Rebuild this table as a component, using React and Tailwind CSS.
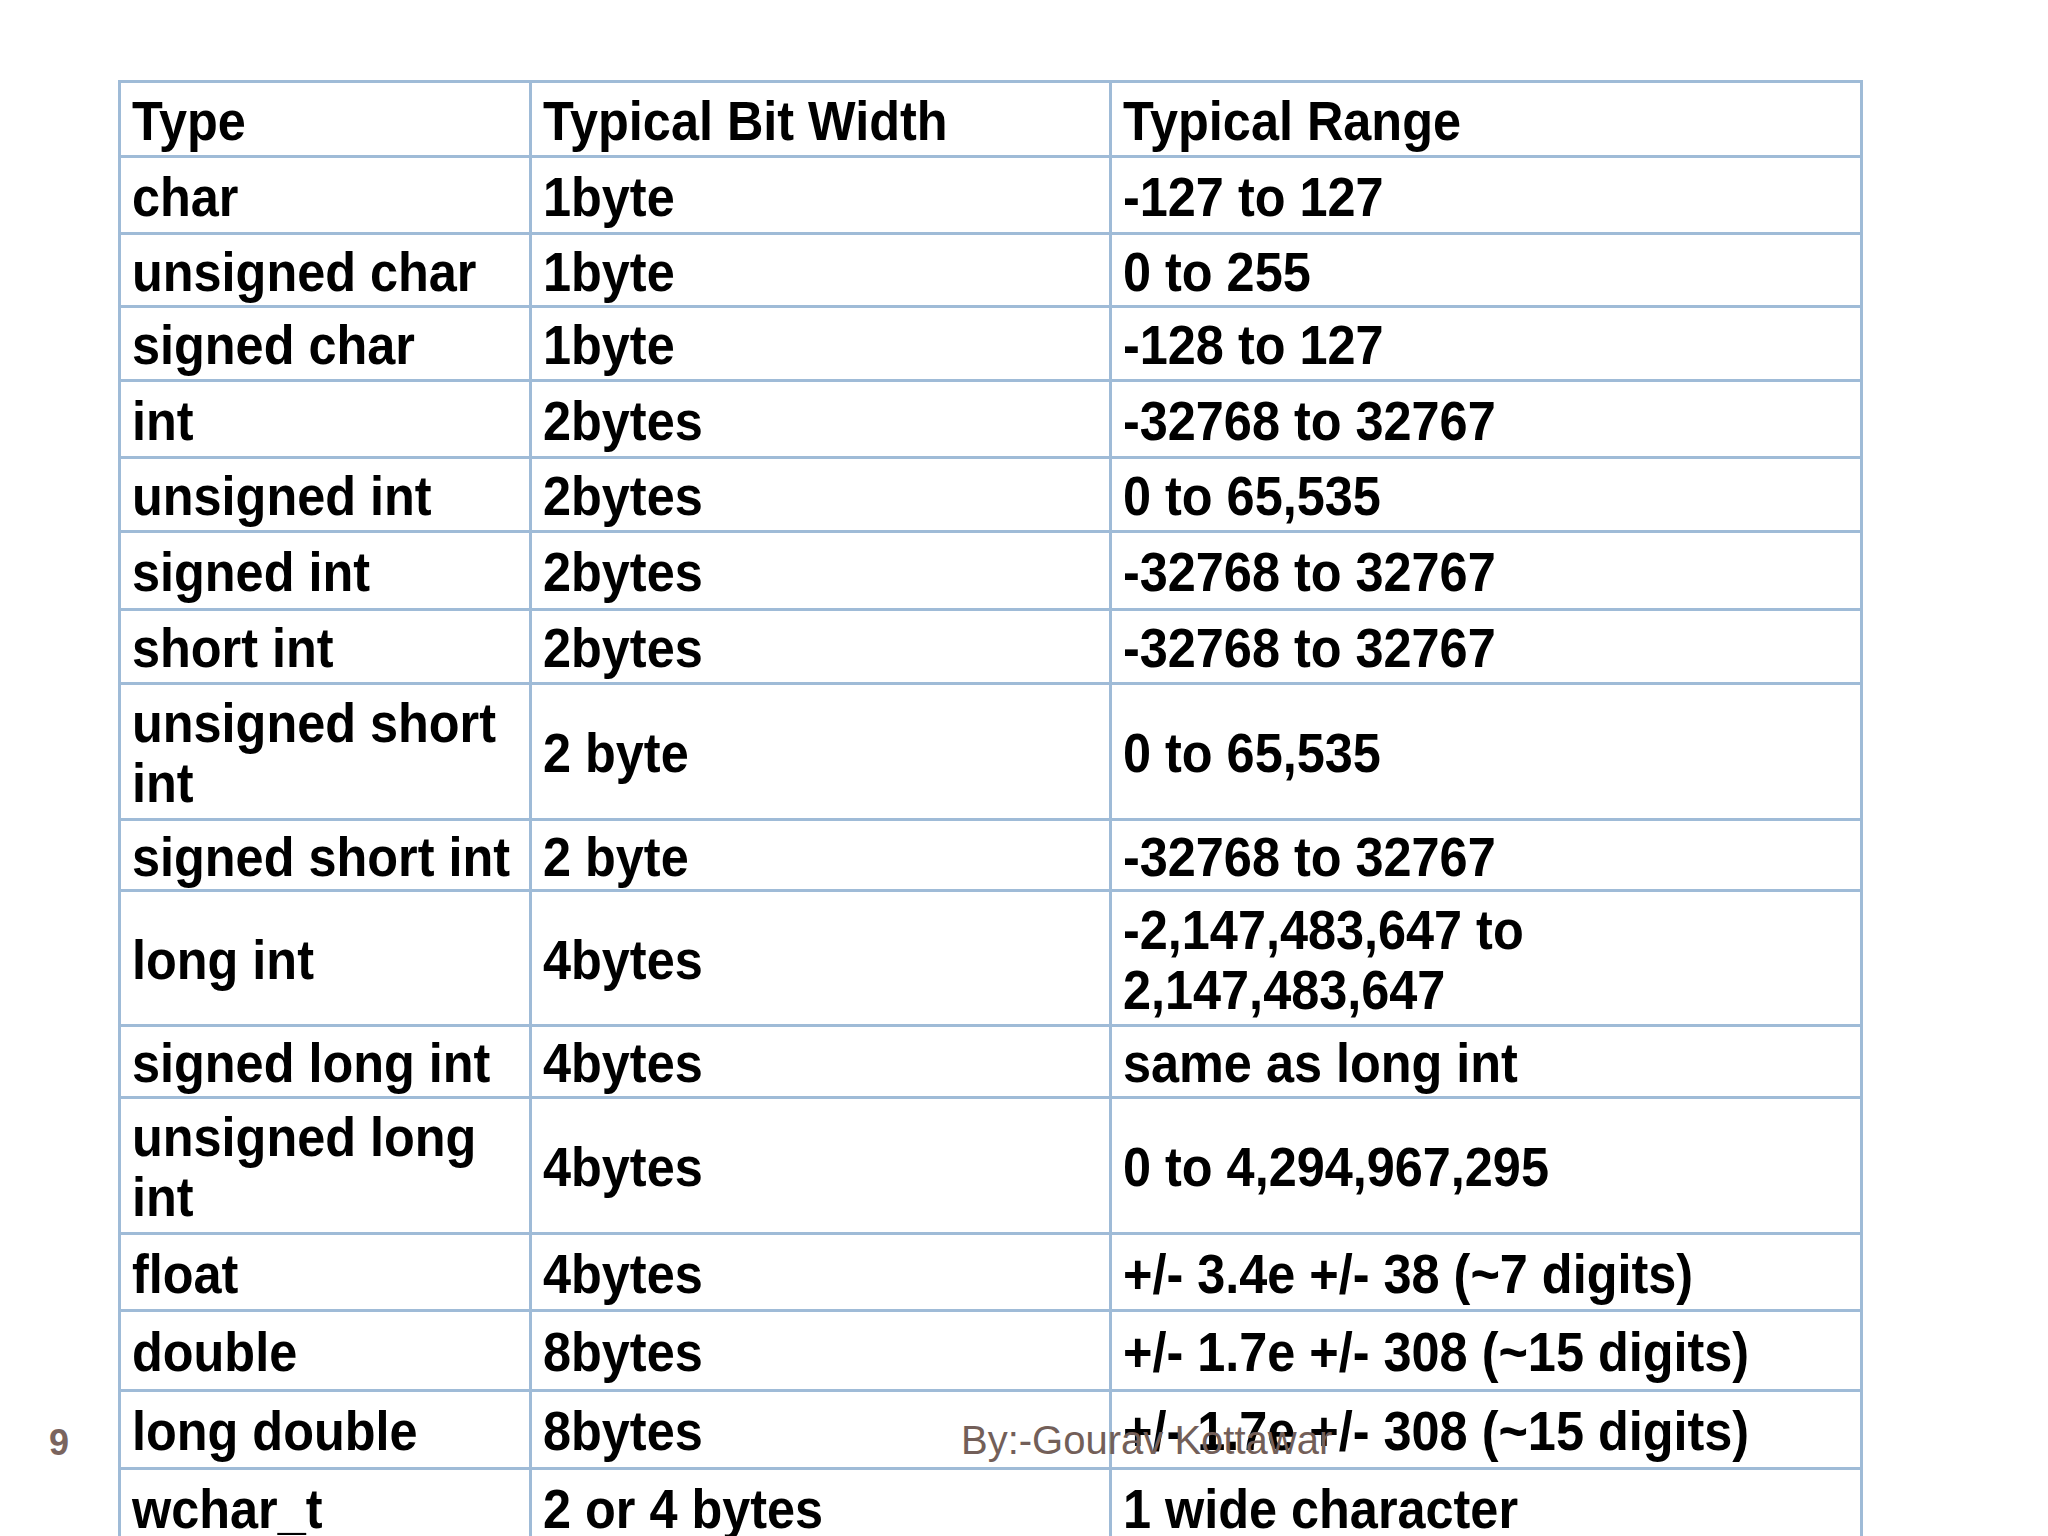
import React from 'react';

const rows = [
  ['char', '1byte', '-127 to 127', 'h-[77px]'],
  ['unsigned char', '1byte', '0 to 255', 'h-[73px]'],
  ['signed char', '1byte', '-128 to 127', 'h-[74px]'],
  ['int', '2bytes', '-32768 to 32767', 'h-[77px]'],
  ['unsigned int', '2bytes', '0 to 65,535', 'h-[74px]'],
  ['signed int', '2bytes', '-32768 to 32767', 'h-[78px]'],
  ['short int', '2bytes', '-32768 to 32767', 'h-[74px]'],
  [['unsigned short', 'int'], '2 byte', '0 to 65,535', 'h-[136px]'],
  ['signed short int', '2 byte', '-32768 to 32767', 'h-[71px]'],
  ['long int', '4bytes', ['-2,147,483,647 to', '2,147,483,647'], 'h-[135px]'],
  ['signed long int', '4bytes', 'same as long int', 'h-[72px]'],
  [['unsigned long', 'int'], '4bytes', '0 to 4,294,967,295', 'h-[136px]'],
  ['float', '4bytes', '+/- 3.4e +/- 38 (~7 digits)', 'h-[77px]'],
  ['double', '8bytes', '+/- 1.7e +/- 308 (~15 digits)', 'h-[80px]'],
  ['long double', '8bytes', '+/- 1.7e +/- 308 (~15 digits)', 'h-[78px]'],
  ['wchar_t', '2 or 4 bytes', '1 wide character', 'h-[78px]'],
];

function Cell({ value }) {
  const lines = Array.isArray(value) ? value : [value];
  return (
    <td className="border-[3px] border-[#9fbbd7] pl-[11px] pr-0 pt-[5px] pb-[2px] align-middle">
      <span className="inline-block origin-left scale-x-90 whitespace-nowrap">
        {lines.map((l, i) => (
          <React.Fragment key={i}>
            {i > 0 && <br />}
            {l}
          </React.Fragment>
        ))}
      </span>
    </td>
  );
}

export default function App() {
  return (
    <div
      className="relative w-[2048px] h-[1536px] overflow-hidden bg-white"
      style={{ fontFamily: '"Liberation Sans", Arial, sans-serif' }}
    >
      <div className="pt-[80px] pl-[118px]">
        <table className="table-fixed w-[1742px] border-collapse text-[56px] leading-[60px] font-bold text-black">
          <colgroup>
            <col className="w-[411px]" />
            <col className="w-[580px]" />
            <col className="w-[751px]" />
          </colgroup>
          <tbody>
            <tr className="h-[75px]">
              <Cell value="Type" />
              <Cell value="Typical Bit Width" />
              <Cell value="Typical Range" />
            </tr>
            {rows.map((r, i) => (
              <tr key={i} className={r[3]}>
                <Cell value={r[0]} />
                <Cell value={r[1]} />
                <Cell value={r[2]} />
              </tr>
            ))}
          </tbody>
        </table>
      </div>

      {/* slide footer */}
      <div className="absolute left-[49px] top-[1425px] text-[36px] leading-none font-bold text-[#7a645e]">
        9
      </div>
      <div className="absolute left-[961px] top-[1420px] text-[40px] leading-none text-[#735f59]">
        By:-Gourav Kottawar
      </div>
    </div>
  );
}
